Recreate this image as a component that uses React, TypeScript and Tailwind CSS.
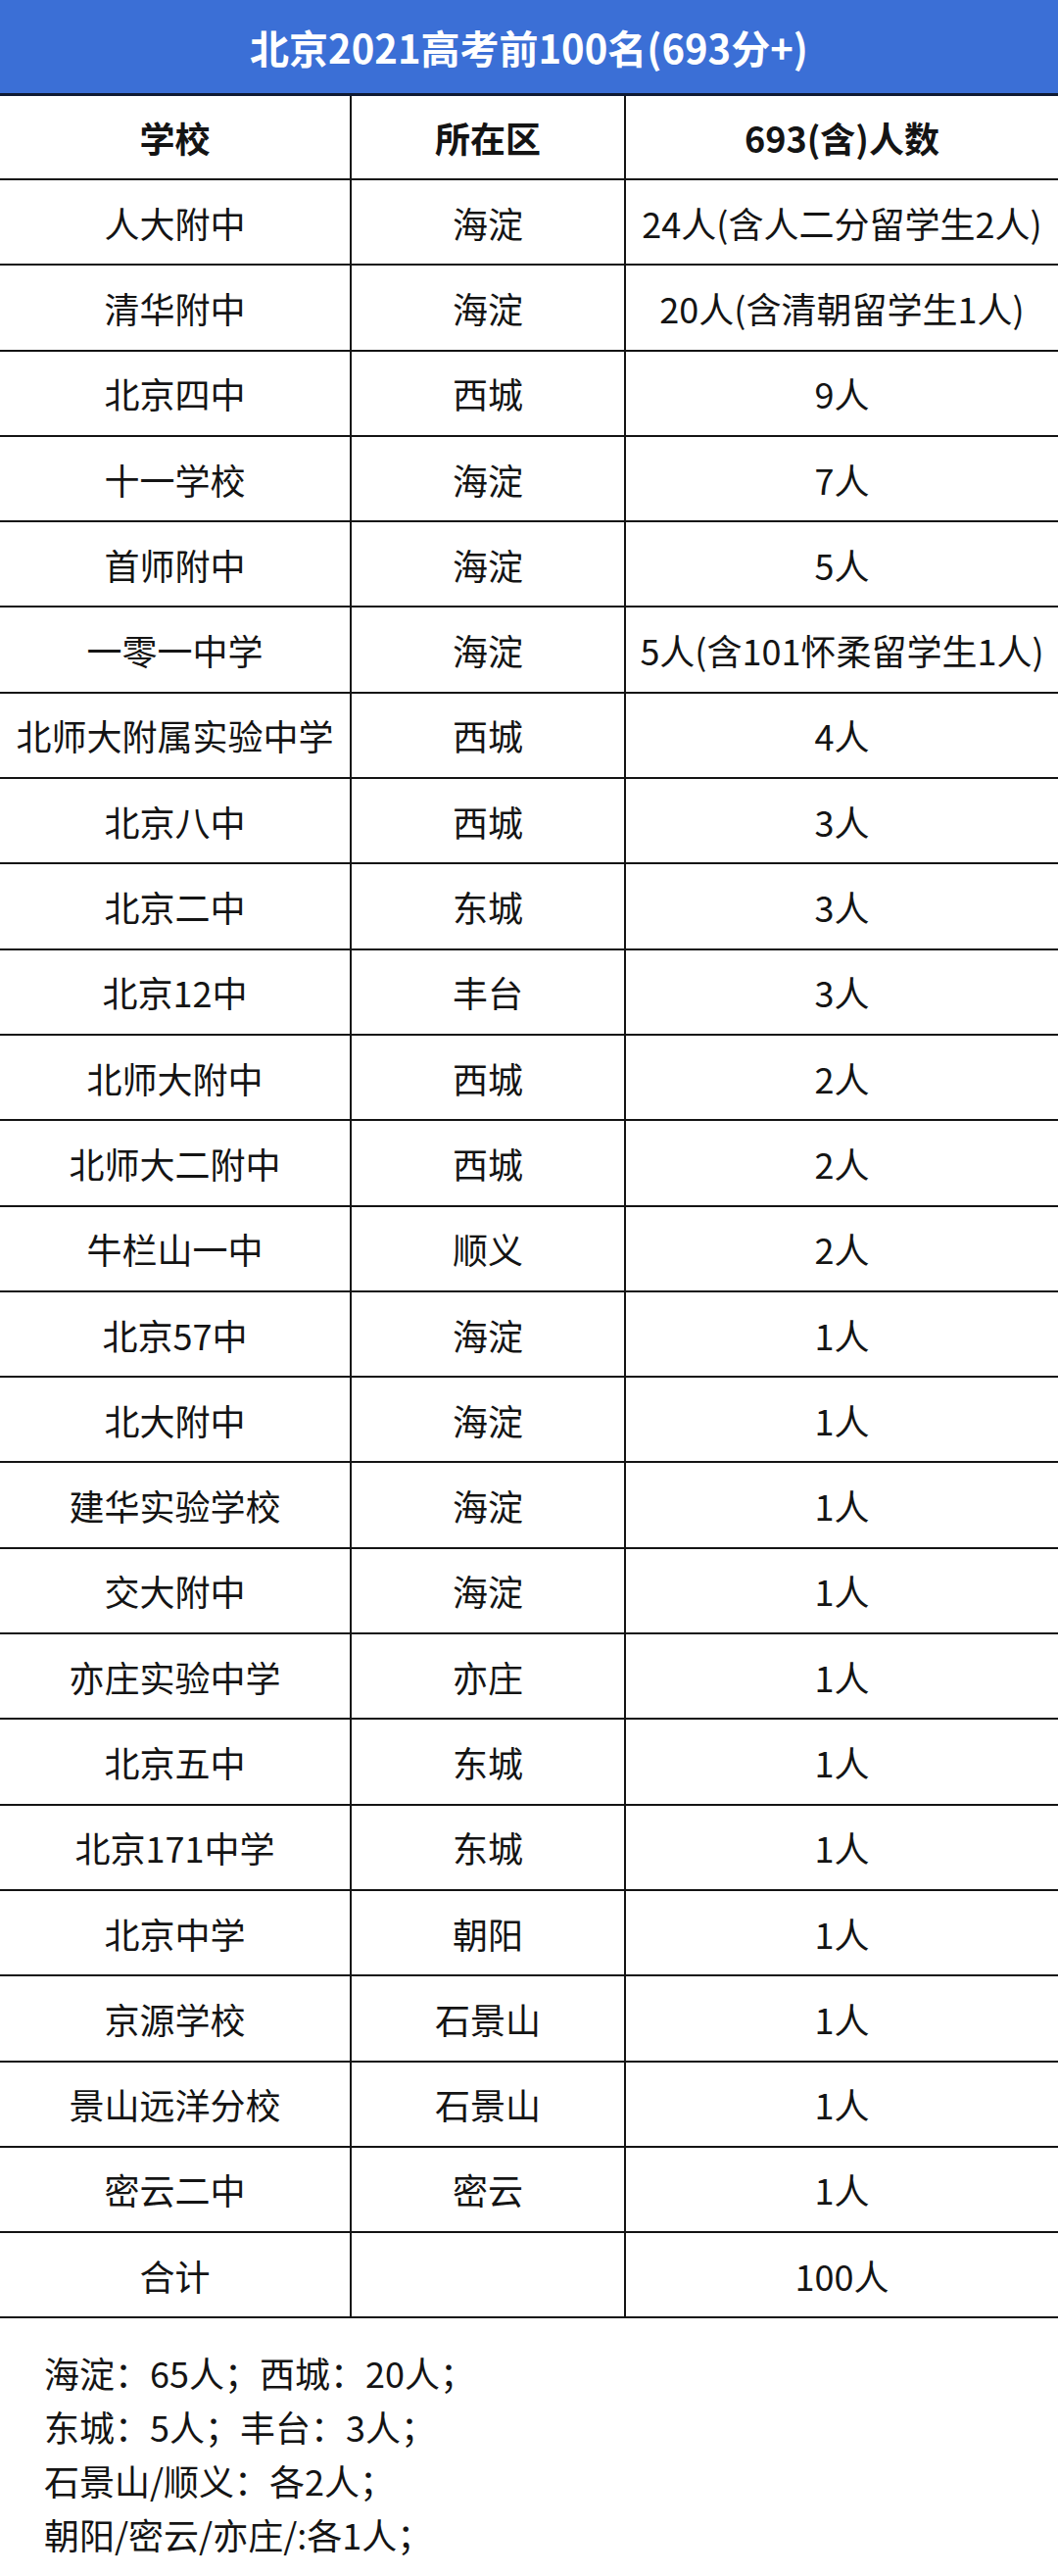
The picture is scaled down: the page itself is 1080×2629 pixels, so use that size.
import React from "react";

const rows: [string, string, string][] = [
  ["人大附中", "海淀", "24人(含人二分留学生2人)"],
  ["清华附中", "海淀", "20人(含清朝留学生1人)"],
  ["北京四中", "西城", "9人"],
  ["十一学校", "海淀", "7人"],
  ["首师附中", "海淀", "5人"],
  ["一零一中学", "海淀", "5人(含101怀柔留学生1人)"],
  ["北师大附属实验中学", "西城", "4人"],
  ["北京八中", "西城", "3人"],
  ["北京二中", "东城", "3人"],
  ["北京12中", "丰台", "3人"],
  ["北师大附中", "西城", "2人"],
  ["北师大二附中", "西城", "2人"],
  ["牛栏山一中", "顺义", "2人"],
  ["北京57中", "海淀", "1人"],
  ["北大附中", "海淀", "1人"],
  ["建华实验学校", "海淀", "1人"],
  ["交大附中", "海淀", "1人"],
  ["亦庄实验中学", "亦庄", "1人"],
  ["北京五中", "东城", "1人"],
  ["北京171中学", "东城", "1人"],
  ["北京中学", "朝阳", "1人"],
  ["京源学校", "石景山", "1人"],
  ["景山远洋分校", "石景山", "1人"],
  ["密云二中", "密云", "1人"],
  ["合计", "", "100人"],
];

const font = { fontFamily: '"Noto Sans CJK SC", "Noto Sans", sans-serif' };

export default function App() {
  return (
    <div className="w-[1080px] h-[2629px] bg-white text-[#141414]" style={font}>
      <div className="h-[95px] bg-[#3b6fd6] flex items-center justify-center text-white text-[40px] font-bold leading-none">
        北京2021高考前100名(693分+)
      </div>
      <div className="grid grid-cols-[359px_280px_1fr] h-[89px] border-t-[3px] border-b-2 border-t-[#0f1a33] border-b-[#141414] text-[36px] font-bold leading-none">
        <div className="flex items-center justify-center border-r-2 border-[#141414]">学校</div>
        <div className="flex items-center justify-center border-r-2 border-[#141414]">所在区</div>
        <div className="flex items-center justify-center">693(含)人数</div>
      </div>
      {rows.map((r, i) => (
        <div
          key={i}
          className="grid grid-cols-[359px_280px_1fr] h-[87.3px] border-b-2 border-[#141414] text-[36px] leading-none"
        >
          <div className="flex items-center justify-center border-r-2 border-[#141414] whitespace-nowrap">{r[0]}</div>
          <div className="flex items-center justify-center border-r-2 border-[#141414] whitespace-nowrap">{r[1]}</div>
          <div className="flex items-center justify-center whitespace-nowrap">{r[2]}</div>
        </div>
      ))}
      <div className="pt-[28px] pl-[45px] text-[36px] leading-[55px]">
        <div>海淀：65人；西城：20人；</div>
        <div>东城：5人；丰台：3人；</div>
        <div>石景山/顺义：各2人；</div>
        <div>朝阳/密云/亦庄/:各1人；</div>
      </div>
    </div>
  );
}
